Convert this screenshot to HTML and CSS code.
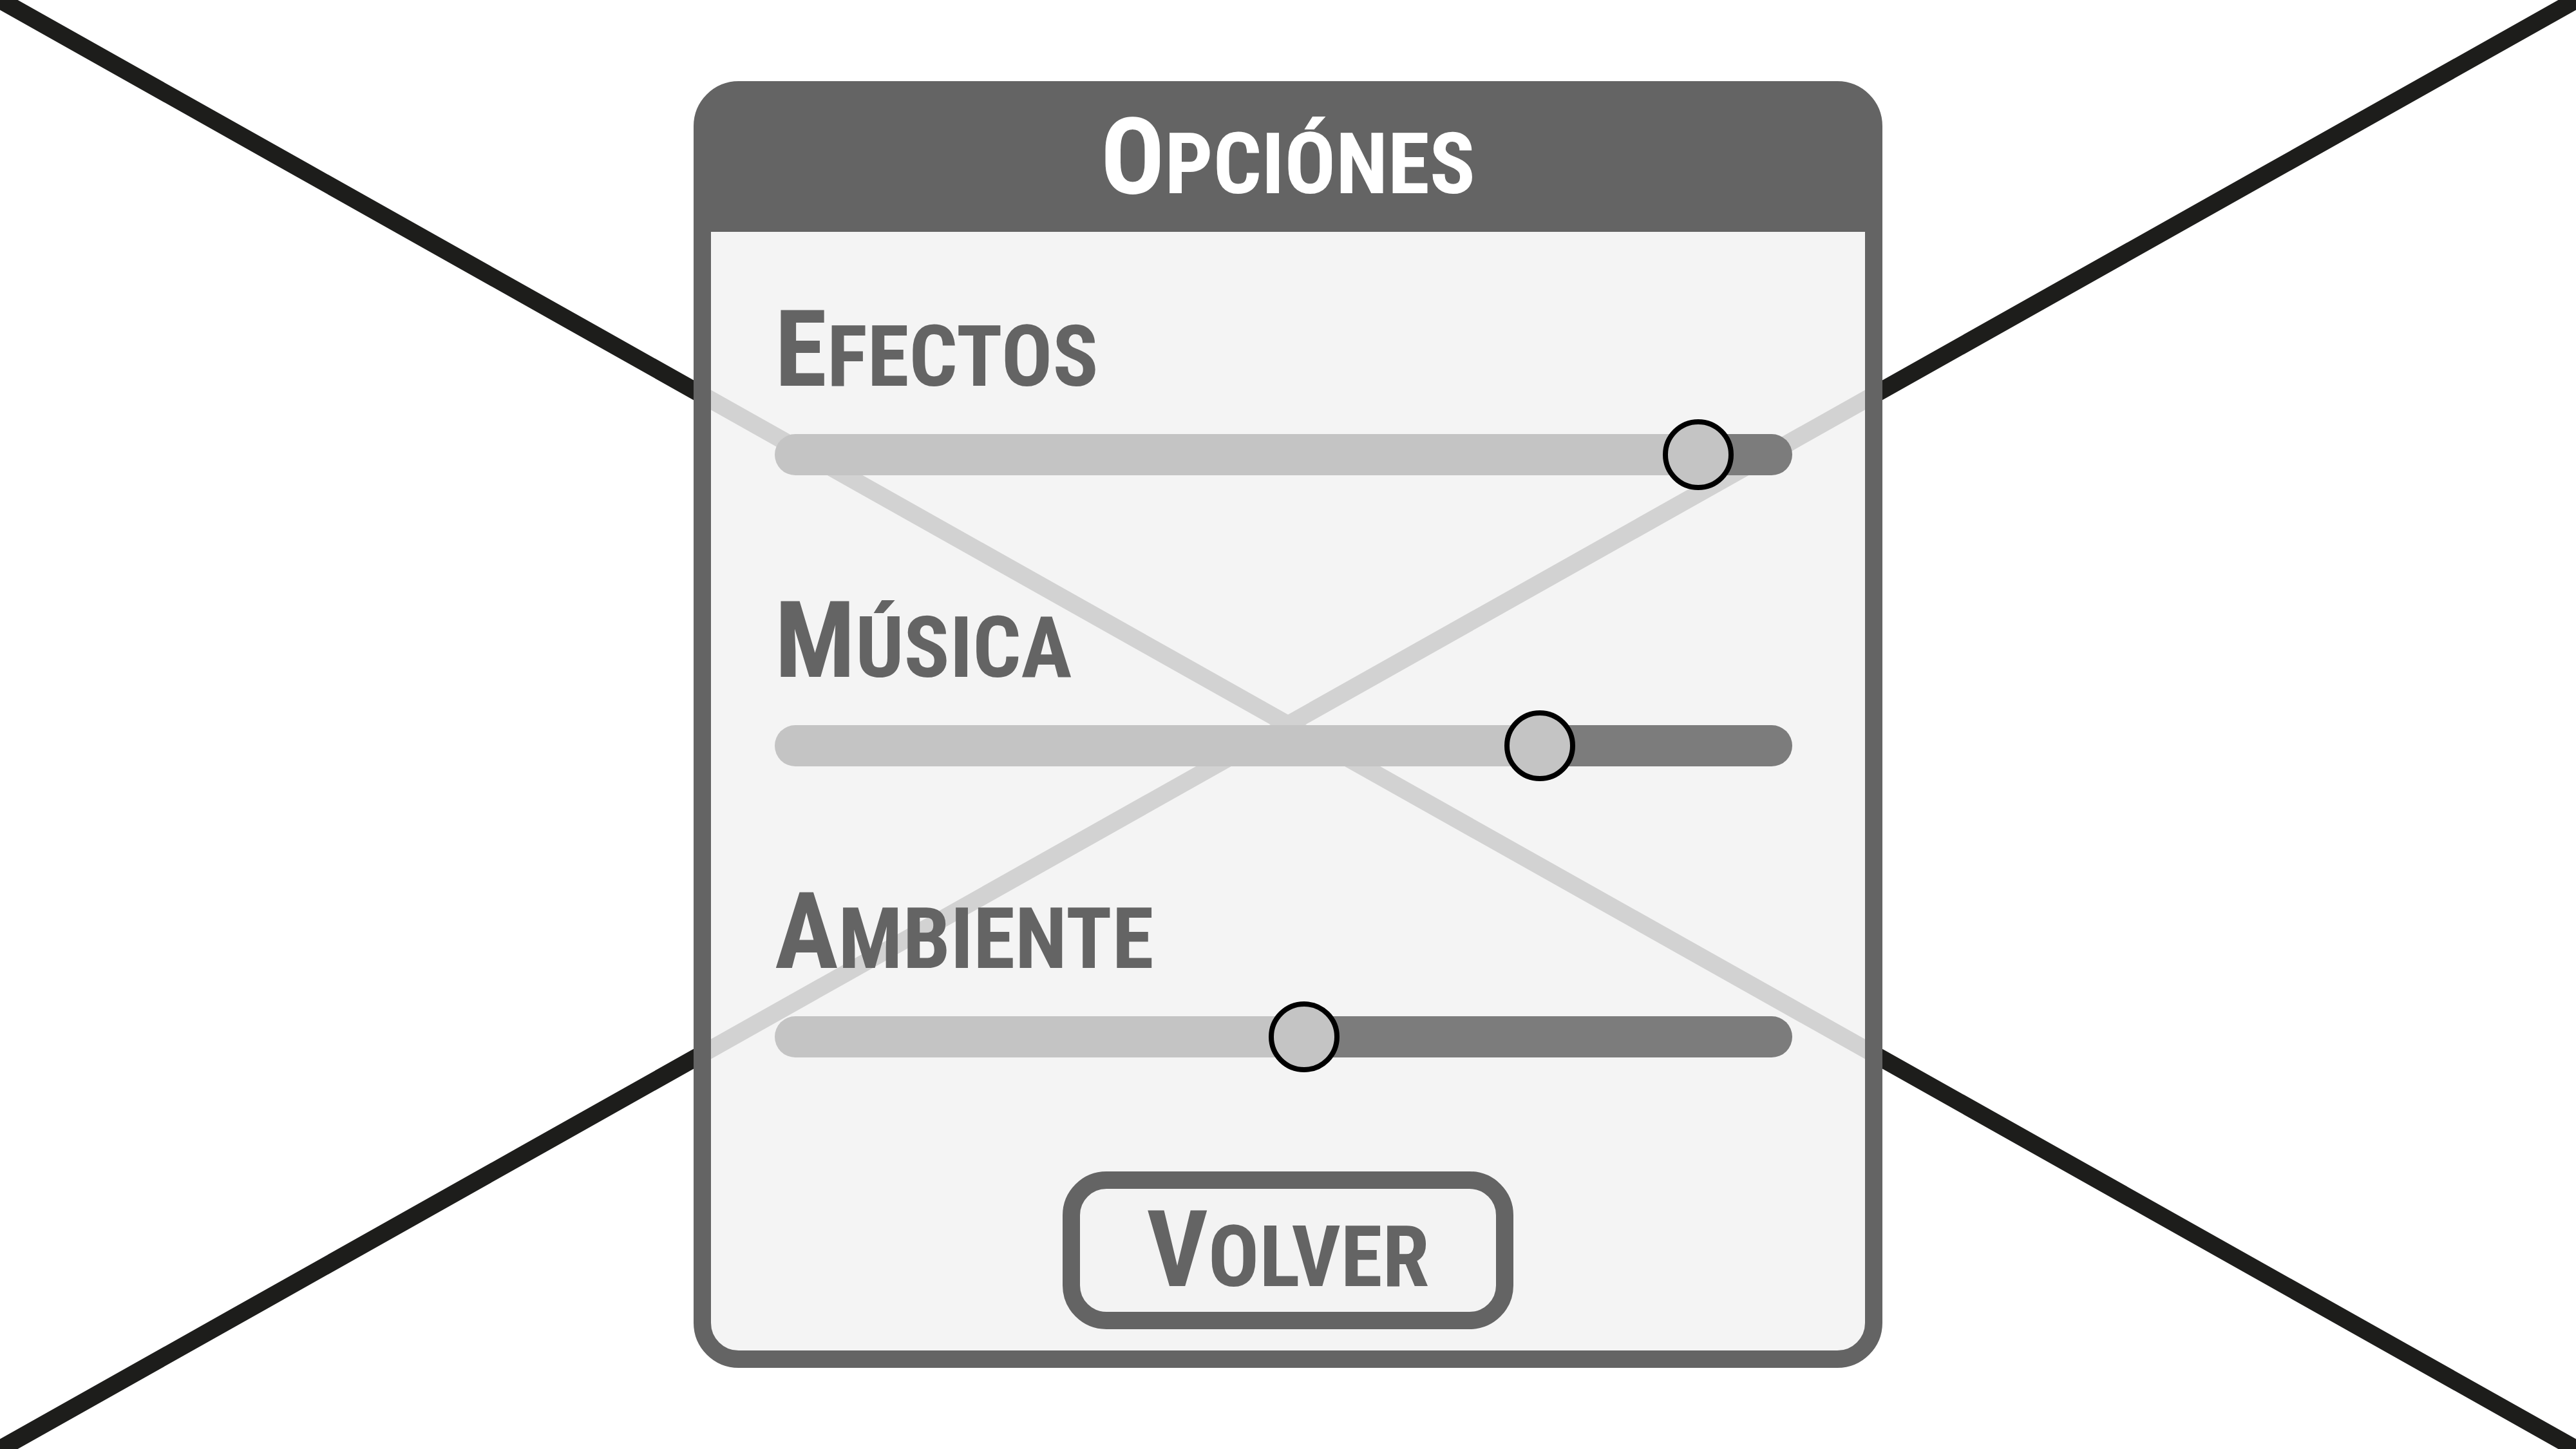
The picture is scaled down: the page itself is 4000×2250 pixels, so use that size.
FILE: index.html
```html
<!DOCTYPE html>
<html lang="es">
<head>
<meta charset="utf-8">
<meta name="viewport" content="width=device-width, initial-scale=1">
<title>Opciónes</title>
<link rel="stylesheet" href="styles.css">
</head>
<body>
<svg class="backdrop" viewBox="0 0 100 100" preserveAspectRatio="none" aria-hidden="true">
  <path d="M-10 -10L110 110M110 -10L-10 110" vector-effect="non-scaling-stroke"/>
</svg>
<main class="screen">
  <form class="panel">
    <h1 class="panel-title caps">Opciónes</h1>
    <div class="panel-body">
      <div class="field">
        <label class="caps" for="efectos">Efectos</label>
        <input class="slider" id="efectos" type="range" min="0" max="1000" value="938" style="--value: 0.938">
      </div>
      <div class="field">
        <label class="caps" for="musica">Música</label>
        <input class="slider" id="musica" type="range" min="0" max="1000" value="771" style="--value: 0.771">
      </div>
      <div class="field">
        <label class="caps" for="ambiente">Ambiente</label>
        <input class="slider" id="ambiente" type="range" min="0" max="1000" value="522" style="--value: 0.522">
      </div>
      <button class="back" type="button"><span class="caps">Volver</span></button>
    </div>
  </form>
</main>
</body>
</html>
```
FILE: styles.css
```css
:root {
  --ink: #646464;
  --fill: #c4c4c4;
  --track: #7c7c7c;
  --thumb: 110px;
}

* {
  box-sizing: border-box;
}

body {
  margin: 0;
  background: #fff;
  color: var(--ink);
  font-family: "Liberation Sans Narrow", "Roboto Condensed", Lato, sans-serif;
}

.backdrop {
  position: absolute;
  inset: 0;
  width: 100%;
  height: 100%;
  z-index: -1;
}

.backdrop path {
  fill: none;
  stroke: #1d1d1b;
  stroke-width: 27px;
}

.screen {
  display: grid;
  place-items: center;
  min-height: 100vh;
}

.panel {
  width: 100%;
  max-width: 1846px;
  border: 27px solid var(--ink);
  border-radius: 70px;
  background: rgba(242, 242, 242, 0.85);
  background-clip: padding-box;
}

/* Capital initial followed by smaller capitals */
.caps {
  display: block;
  font-size: 132px;
  font-weight: 700;
  line-height: 160px;
  text-transform: uppercase;
}

.caps::first-letter {
  font-size: 165px;
}

.panel-title {
  margin: 0;
  padding: 11px 0 25px;
  background: var(--ink);
  color: #fff;
  text-align: center;
}

.panel-body {
  display: flex;
  flex-direction: column;
  gap: 154px;
  padding: 103px 113px 33px 99px;
}

.field {
  display: flex;
  flex-direction: column;
  gap: 17px;
}

.slider {
  appearance: none;
  width: 100%;
  height: var(--thumb);
  margin: 0;
  background: none;
}

.slider::-webkit-slider-runnable-track {
  height: 64px;
  border-radius: 32px;
  background: linear-gradient(to right, var(--fill) calc(55px + (100% - var(--thumb)) * var(--value)), var(--track) 0);
}

.slider::-webkit-slider-thumb {
  appearance: none;
  width: var(--thumb);
  height: var(--thumb);
  margin-top: -23px;
  border: 8px solid #000;
  border-radius: 50%;
  background: var(--fill);
}

.back {
  align-self: center;
  width: 700px;
  max-width: 100%;
  margin-left: 14px;
  padding: 15px 0 5px;
  border: 27px solid var(--ink);
  border-radius: 68px;
  background: #f3f3f3;
  color: inherit;
  font: inherit;
}
```
